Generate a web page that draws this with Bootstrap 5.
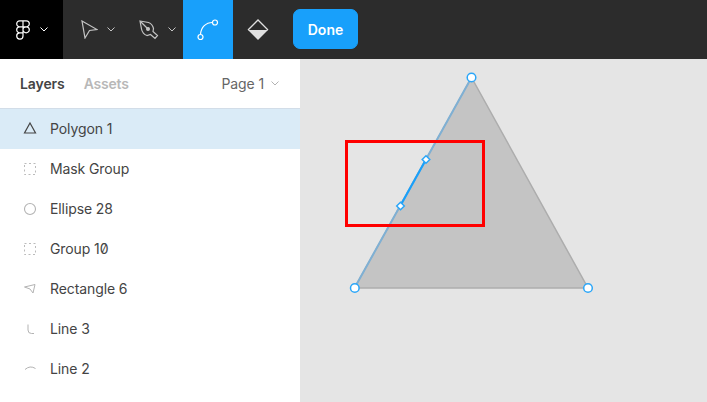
<!DOCTYPE html>
<html lang="en">
<head>
<meta charset="utf-8">
<title>Figma</title>
<link href="https://cdn.jsdelivr.net/npm/bootstrap@5.3.0/dist/css/bootstrap.min.css" rel="stylesheet">
<style>
html,body{height:100%;overflow:hidden}
body{font-family:Inter,"Liberation Sans",sans-serif;font-size:14px;letter-spacing:-.1px;font-feature-settings:"zero";color:#444;background:#e5e5e5}
.app-frame{width:707px;height:402px}
.tool-bar{height:59px;background:#2c2c2c}
.logo-cell{width:63px;background:#000;padding-left:16px;gap:10px}
.tool-cell{height:59px}
.arrow-cell{width:59px;padding-left:18px;gap:9px}
.pen-cell{width:61px;padding-left:17px;gap:9px}
.path-cell{width:50px;background:#18a0fb}
.fill-cell{width:50px}
.done-btn{--bs-btn-bg:#18a0fb;--bs-btn-border-color:#18a0fb;--bs-btn-color:#fff;--bs-btn-hover-bg:#18a0fb;--bs-btn-hover-border-color:#18a0fb;--bs-btn-hover-color:#fff;--bs-btn-border-radius:7px;width:65px;height:40px;padding:0;font-size:14px;font-weight:600;margin:-1px 0 0 10px}
.side-panel{width:300px;background:#fff}
.panel-head{height:50px;border-bottom:1px solid #d2dde8;padding:0 21px 0 20px}
.head-active{font-weight:600;color:#444;margin-right:19px}
.head-muted{font-weight:600;color:#b8b8b8;letter-spacing:-.2px}
.page-pick{color:#666;gap:7px}
.layer-row{height:40px;padding:0 0 2px 20px;gap:10px;color:#444}
.layer-row.is-picked{background:#daebf7}
.layer-ico{width:20px;height:20px;flex:none}
.canvas-zone{background:#e5e5e5;min-width:0}
.canvas-art{display:block}
</style>
</head>
<body>
<div class="app-frame d-flex flex-column">
  <div class="tool-bar d-flex align-items-center">
    <div class="logo-cell tool-cell d-flex align-items-center">
      <svg width="14" height="20" viewBox="0 0 14 20" fill="none" stroke="#fff" stroke-width="1.2"><path d="M7 .8H3.700A3 3 0 0 0 3.700 6.800H7ZM7 .8h3.300a3 3 0 0 1 0 6H7ZM7 6.800H3.700a3 3 0 0 0 0 6H7ZM13.300 9.800a3.150 3 0 1 1-6.300 0 3.150 3 0 0 1 6.300 0ZM7 12.800H3.700a3.150 3.150 0 1 0 3.300 3.150Z"/></svg>
      <svg width="8" height="5" viewBox="0 0 8 5" fill="none" stroke="#fff" stroke-width="1"><path d="M.5.5 4 4 7.5.5"/></svg>
    </div>
    <div class="arrow-cell tool-cell d-flex align-items-center">
      <svg width="17" height="19" viewBox="0 0 17 19" fill="none" stroke="#c4c4c4" stroke-width="1.2"><path d="M1 1 16 9.500 8.500 10.500 4 18Z"/></svg>
      <svg width="8" height="5" viewBox="0 0 8 5" fill="none" stroke="#c4c4c4" stroke-width="1"><path d="M.5.5 4 4 7.5.5"/></svg>
    </div>
    <div class="pen-cell tool-cell d-flex align-items-center">
      <svg width="20" height="20" viewBox="0 0 20 20" fill="none" stroke="#c4c4c4" stroke-width="1.2"><path d="M1 1 9.500 2.500Q13.500 4 14.500 8.500L14 11.500 18.500 15.500 16 18.500 11.500 14.500 8 15.500Q3.500 14 2.500 9Z"/><path d="M1.500 1.500 8 8"/><circle cx="9" cy="9" r="1.400" fill="#c4c4c4"/></svg>
      <svg width="8" height="5" viewBox="0 0 8 5" fill="none" stroke="#c4c4c4" stroke-width="1"><path d="M.5.5 4 4 7.5.5"/></svg>
    </div>
    <div class="path-cell tool-cell d-flex align-items-center justify-content-center">
      <svg width="22" height="22" viewBox="0 0 22 22" fill="none" stroke="#fff" stroke-width="1.200"><circle cx="3.500" cy="18" r="2.500"/><circle cx="18" cy="3.500" r="2.500"/><path d="M3.500 15.500C4 8 9 3.500 15.500 3.500"/></svg>
    </div>
    <div class="fill-cell tool-cell d-flex align-items-center justify-content-center">
      <svg width="22" height="22" viewBox="0 0 22 22"><path d="M1 11 11 1 21 11" fill="none" stroke="#e0e0e0" stroke-width="1.300"/><path d="M1 11H21L11 21Z" fill="#e0e0e0"/></svg>
    </div>
    <button type="button" class="btn done-btn">Done</button>
  </div>
  <div class="d-flex flex-grow-1" style="min-height:0">
    <div class="side-panel d-flex flex-column overflow-hidden">
      <div class="panel-head d-flex align-items-center">
        <span class="head-active">Layers</span>
        <span class="head-muted">Assets</span>
        <span class="page-pick ms-auto d-flex align-items-center">Page 1
          <svg width="8" height="5" viewBox="0 0 8 5" fill="none" stroke="#b3b3b3" stroke-width="1"><path d="M.5.5 4 4 7.5.5"/></svg>
        </span>
      </div>
      <div class="layer-row is-picked d-flex align-items-center">
        <svg class="layer-ico" viewBox="0 0 20 20" fill="none" stroke="#444" stroke-width="1.200"><path d="M10 5 15.500 15H4.500Z"/></svg>
        <span>Polygon 1</span>
      </div>
      <div class="layer-row d-flex align-items-center">
        <svg class="layer-ico" viewBox="0 0 20 20" fill="none" stroke="#bbb" stroke-width="1" stroke-dasharray="2 2.500"><rect x="4.500" y="5.500" width="11" height="11"/></svg>
        <span>Mask Group</span>
      </div>
      <div class="layer-row d-flex align-items-center">
        <svg class="layer-ico" viewBox="0 0 20 20" fill="none" stroke="#b3b3b3" stroke-width="1.100"><circle cx="10" cy="11" r="5.500"/></svg>
        <span>Ellipse 28</span>
      </div>
      <div class="layer-row d-flex align-items-center">
        <svg class="layer-ico" viewBox="0 0 20 20" fill="none" stroke="#bbb" stroke-width="1" stroke-dasharray="2 2.500"><rect x="4.500" y="5.500" width="11" height="11"/></svg>
        <span>Group 10</span>
      </div>
      <div class="layer-row d-flex align-items-center">
        <svg class="layer-ico" viewBox="0 0 20 20" fill="none" stroke="#b3b3b3" stroke-width="1"><path d="M4.500 9 15 6.500 13 15 10 11Z"/></svg>
        <span>Rectangle 6</span>
      </div>
      <div class="layer-row d-flex align-items-center">
        <svg class="layer-ico" viewBox="0 0 20 20" fill="none" stroke="#b3b3b3" stroke-width="1"><path d="M8 6.500V12Q8 15.500 11.500 15.500H14"/></svg>
        <span>Line 3</span>
      </div>
      <div class="layer-row d-flex align-items-center">
        <svg class="layer-ico" viewBox="0 0 20 20" fill="none" stroke="#b3b3b3" stroke-width="1"><path d="M5 11.500Q10 7 15.500 10.500"/></svg>
        <span>Line 2</span>
      </div>
    </div>
    <div class="canvas-zone flex-grow-1">
      <svg class="canvas-art" width="407" height="343" viewBox="300 59 407 343">
        <path d="M471.500 77.500 354.500 288H588Z" fill="#c4c4c4" stroke="#adadad" stroke-width="1.500"/>
        <path d="M471.500 77.500 354.500 288" fill="none" stroke="#7fb0d4" stroke-width="2"/>
        <path d="M426 159.500 400.500 205.500" fill="none" stroke="#18a0fb" stroke-width="2"/>
        <rect x="346.500" y="141.500" width="137" height="84" fill="none" stroke="#f00" stroke-width="3"/>
        <g fill="#fff" stroke="#2ba6f8" stroke-width="1.500">
          <circle cx="471.500" cy="77.500" r="4.300"/>
          <circle cx="354.800" cy="288" r="4.300"/>
          <circle cx="588" cy="288" r="4.300"/>
          <path d="M426 155.700 429.800 159.500 426 163.300 422.200 159.500Z"/>
          <path d="M400.500 202.200 404.300 206 400.500 209.800 396.700 206Z"/>
        </g>
      </svg>
    </div>
  </div>
</div>
<script src="https://cdn.jsdelivr.net/npm/bootstrap@5.3.0/dist/js/bootstrap.bundle.min.js"></script>
</body>
</html>
